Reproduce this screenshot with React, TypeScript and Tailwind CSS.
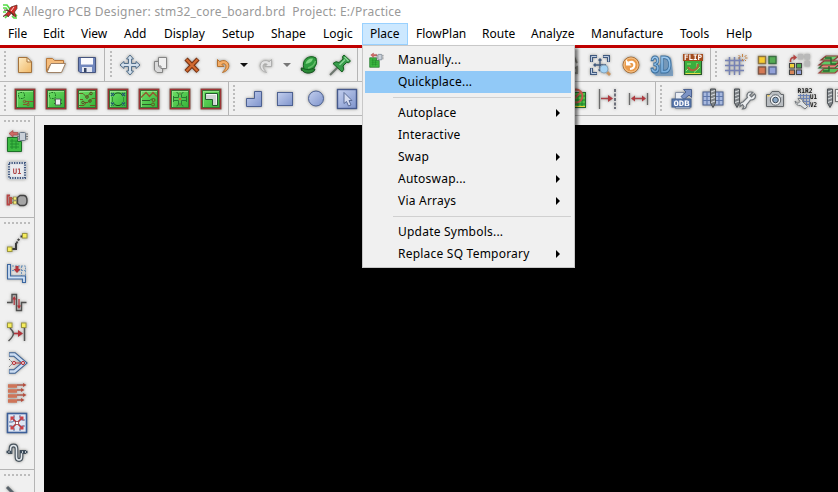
import React from "react";

type Glyph = () => React.ReactNode;

const Svg = ({ children }: { children: React.ReactNode }) => (
  <svg
    width="24"
    height="24"
    viewBox="0 0 24 24"
    fill="none"
    className="shrink-0 overflow-visible drop-shadow-[0_0_1.5px_rgba(70,70,60,0.55)]"
  >
    {children}
  </svg>
);

const Gradients = () => (
  <svg width="0" height="0" className="absolute">
    <defs>
      <linearGradient id="steel" x1="0" y1="0" x2="1" y2="1">
        <stop offset="0" stopColor="#c3cfee" />
        <stop offset="1" stopColor="#7f94cc" />
      </linearGradient>
      <linearGradient id="leaf" x1="0" y1="0" x2="1" y2="1">
        <stop offset="0" stopColor="#6bdc62" />
        <stop offset="1" stopColor="#37b43a" />
      </linearGradient>
      <linearGradient id="sand" x1="0" y1="0" x2="1" y2="1">
        <stop offset="0" stopColor="#fdebc4" />
        <stop offset="1" stopColor="#f0b765" />
      </linearGradient>
      <linearGradient id="sky" x1="0" y1="0" x2="0" y2="1">
        <stop offset="0" stopColor="#a9d0f2" />
        <stop offset="1" stopColor="#6fa9dc" />
      </linearGradient>
    </defs>
  </svg>
);

/* ---------- file and edit glyphs ---------- */

const NewFile: Glyph = () => (
  <g stroke="#a5733c">
    <path d="M5.500 4.500H14L18.500 9V19.500H5.500Z" fill="url(#sand)" />
    <path d="M14 4.500V9H18.500Z" fill="#fff3d8" />
  </g>
);
const OpenFolder: Glyph = () => (
  <g stroke="#b8793c">
    <path d="M2.500 18.500V5.500H8.500L10.500 7.500H19.500V12H6Z" fill="#f5bd7c" />
    <path d="M3 19.500L7 10.500H21.500L17.500 19.500Z" fill="#fffefb" stroke="#a08266" />
  </g>
);
const Save: Glyph = () => (
  <g>
    <path d="M3.500 4.500H20.500V19.500H5L3.500 18Z" fill="#7187bd" stroke="#46557f" />
    <rect x="6" y="5" width="12" height="7" fill="#f8f9fd" />
    <path d="M6 11.500H18" stroke="#b9c2de" />
    <rect x="7" y="14" width="10" height="5" fill="#e3e7f2" />
    <rect x="9" y="15" width="2.500" height="4" fill="#344465" />
  </g>
);
const Move: Glyph = () => (
  <path
    d="M12 2L15.500 6H13.500V10.500H18V8.500L22 12L18 15.500V13.500H13.500V18H15.500L12 22L8.500 18H10.500V13.500H6V15.500L2 12L6 8.500V10.500H10.500V6H8.500Z"
    fill="#d3e0ec"
    stroke="#55718c"
  />
);
const Copy: Glyph = () => (
  <g stroke="#858585">
    <path d="M5.500 8.500H13.500V19.500H8L5.500 17Z" fill="#dadada" />
    <path d="M9.500 4.500H17.500V15.500H12L9.500 13Z" fill="#efefef" />
    <path d="M9.500 13H12V15.500" />
  </g>
);
const Delete: Glyph = () => (
  <g>
    <path d="M6 6L18 18.500M18 6L6 18.500" stroke="#7a3212" strokeWidth="4.400" />
    <path d="M6.500 6.500L17.500 18M17.500 6.500L6.500 18" stroke="#d26a30" strokeWidth="2.200" />
  </g>
);
const Undo: Glyph = () => (
  <path
    d="M6.500 6.500V13.500H13L10.800 11.300C13.500 9.800 15.500 11.500 14.800 14.500C14.400 16.300 13 17.500 11.500 19.500C15.500 18.500 18 15.500 17.800 12.500C17.500 8 12.500 6.200 8.700 8.700Z"
    fill="#f3ad67"
    stroke="#b5712f"
  />
);
const Redo: Glyph = () => (
  <path
    d="M17.500 6.500V13.500H11L13.200 11.300C10.500 9.800 8.500 11.500 9.200 14.500C9.600 16.300 11 17.500 12.500 19.500C8.500 18.500 6 15.500 6.200 12.500C6.500 8 11.500 6.200 15.300 8.700Z"
    fill="#e3e3e3"
    stroke="#aeaeae"
  />
);
const PinRound: Glyph = () => (
  <g>
    <path d="M4 17L9 15" stroke="#333" strokeWidth="2" />
    <path d="M4 15Q6 21 13 20Q18 19 18 16Z" fill="#2a8a36" stroke="#165020" />
    <path d="M7 16Q5 9 9 5.500Q14 2 19 5Q21 11 17 15Q12 18 7 16Z" fill="#2f9c3f" stroke="#15601f" />
    <path d="M8.500 11Q10 5 16 5.500Q15 10 8.500 11Z" fill="#7ed482" />
    <path d="M11 15Q17 13.500 18.500 8" stroke="#65bb68" strokeWidth="1.300" />
  </g>
);
const PinLong: Glyph = () => (
  <g>
    <path d="M2 22L11 13" stroke="#6c756d" strokeWidth="2" />
    <path d="M5 10.500Q8 7.500 11 9.500L15 6Q13.500 3.500 16 2L22.500 8Q21 10.500 18.500 9.500L15 13Q17 16.500 14 19Z" fill="#379c4b" stroke="#15601f" />
    <path d="M11.500 12L17 6.500M16.500 4L20.500 8" stroke="#8ad495" strokeWidth="1.500" />
  </g>
);

/* ---------- circuit board glyphs ---------- */

const Board = ({ children }: { children?: React.ReactNode }) => (
  <g>
    <rect x="1.500" y="1.500" width="21" height="21" fill="#8c5149" />
    <rect x="2" y="2" width="20" height="20" fill="#9c3436" />
    <rect x="3" y="3" width="18" height="18" fill="#3c6e33" />
    <rect x="4" y="4" width="16" height="16" fill="#98e68e" />
    <rect x="4.800" y="4.800" width="15.200" height="15.200" fill="url(#leaf)" />
    {children}
  </g>
);
const BoardTrace: Glyph = () => (
  <Board>
    <rect x="5.500" y="5.500" width="6" height="6" rx="2" stroke="#14601c" strokeDasharray="1.400 1" />
    <path d="M10 17.500H14L16.500 14.500H20M12 14.500H16" stroke="#8a5530" />
    <circle cx="11.500" cy="14.500" r="1.200" stroke="#8a5530" />
    <circle cx="15" cy="17.500" r="1.200" stroke="#8a5530" />
  </Board>
);
const BoardPart: Glyph = () => (
  <Board>
    <rect x="5.500" y="5.500" width="6" height="6" rx="2" stroke="#14601c" strokeDasharray="1.400 1" />
    <path d="M10 13H18M10 16.500H18" stroke="#285a2c" />
    <rect x="11.500" y="12" width="5" height="6" fill="#eceff0" stroke="#53665a" />
  </Board>
);
const BoardNets: Glyph = () => (
  <Board>
    <path d="M4 6.500H8L11 9.500M12 9.500L15 6.500M20 11.500H17L13 15.500H9M4 18.500H9L11 16M15 18.500H20M5 12.500H8" stroke="#6b5a26" />
    <g stroke="#5a4a22">
      <circle cx="12" cy="10" r="1.300" /><circle cx="16" cy="6.500" r="1.300" /><circle cx="8" cy="15.500" r="1.300" /><circle cx="15" cy="14" r="1.300" />
    </g>
  </Board>
);
const BoardArcs: Glyph = () => (
  <Board>
    <path d="M8 8Q9 6 11 6H13Q15 6 16 8M8 16.500Q9 18.500 11 18.500H13Q15 18.500 16 16.500" stroke="#14501c" />
    <path d="M5 6L8 9M8 6L5 9M16 6L19 9M19 6L16 9M5 15.500L8 18.500M8 15.500L5 18.500M16 15.500L19 18.500M19 15.500L16 18.500" stroke="#23566c" strokeWidth="1.200" />
    <path d="M6.500 10V15M17.500 10V15" stroke="#2f9135" />
  </Board>
);
const BoardZig: Glyph = () => (
  <Board>
    <path d="M4 10.500L9 5.500L12.500 9.500L16 5.500L20 9.500" stroke="#95572f" strokeWidth="1.300" />
    <path d="M5 13.500H13L15 11.500M5 17.500H14" stroke="#2c5e28" />
    <circle cx="16.500" cy="13" r="1.500" stroke="#6b4e22" />
    <circle cx="16" cy="17.500" r="1.500" stroke="#6b4e22" />
  </Board>
);
const BoardCross: Glyph = () => (
  <Board>
    <path d="M10.500 10.500V7.500Q10.500 5.500 8.500 5.500M13.500 10.500V7.500Q13.500 5.500 15.500 5.500M10.500 13.500V17Q10.500 19 8.500 19M13.500 13.500V17Q13.500 19 15.500 19M5.500 9V15M18.500 9V15M5.500 10.500H10.500M5.500 13.500H10.500M13.500 10.500H18.500M13.500 13.500H18.500" stroke="#2a7c34" />
    <circle cx="12" cy="12" r="1.300" fill="#b8733a" />
    <path d="M12 5.500V8M12 16V19" stroke="#7a6a30" />
  </Board>
);
const BoardL: Glyph = () => (
  <Board>
    <path d="M6.500 6.500H18.500V18.500H13.500V12.500H6.500Z" fill="#ced3d2" stroke="#245a30" />
    <path d="M7.500 7.500H17.500V17.500" stroke="#f4f4f4" />
  </Board>
);

/* ---------- shapes ---------- */

const ShapeL: Glyph = () => <path d="M12.500 4.500H19.500V19.500H4.500V11.500H12.500Z" fill="url(#steel)" stroke="#4d6192" />;
const ShapeRect: Glyph = () => <rect x="4.500" y="5.500" width="15" height="13" fill="url(#steel)" stroke="#4d6192" />;
const ShapeCircle: Glyph = () => <circle cx="12" cy="11.500" r="7.500" fill="url(#steel)" stroke="#4d6192" />;
const SelectArrow: Glyph = () => (
  <g>
    <rect x="2.500" y="2.500" width="19" height="19" fill="url(#steel)" stroke="#46598c" strokeWidth="1.400" />
    <path d="M9 5.500V16.500L11.500 14.500L13.500 19L16 18L14 13.500H17Z" fill="#d5dcf0" stroke="#5b6d98" />
  </g>
);

/* ---------- view glyphs ---------- */

const ZoomFit: Glyph = () => (
  <g>
    <path d="M3.500 9V3.500H9M15 3.500H20.500V9M3.500 15V20.500H9" stroke="#40597e" strokeWidth="3" />
    <path d="M3.500 8.500V3.500H8.500M15.500 3.500H20.500V8.500M3.500 15.500V20.500H8.500" stroke="#bdcde2" strokeWidth="1" />
    <path d="M12 6V18M6 12H18M10.500 7.500L12 6L13.500 7.500M7.500 10.500L6 12L7.500 13.500M10.500 16.500L12 18" stroke="#40597e" strokeWidth="1.300" />
    <path d="M18 18L22 22" stroke="#c99460" strokeWidth="2.600" />
    <circle cx="16" cy="16" r="4" fill="#a5d3f4" stroke="#88a6bd" />
  </g>
);
const Refresh: Glyph = () => (
  <g>
    <circle cx="12" cy="12" r="8" fill="#e99a4a" stroke="#a5713f" />
    <circle cx="12" cy="12" r="7" stroke="#f7c890" />
    <path d="M9.500 9.800Q14 7.500 15.300 11Q16 15.500 11 16" stroke="#fff" strokeWidth="2.200" />
    <path d="M7 6.500V12.500H12.500Z" fill="#fff" />
  </g>
);
const ThreeD: Glyph = () => (
  <g>
    <path d="M2 19L6 23H23V19L21 5L18 3Z" fill="#6f97bd" opacity=".85" />
    <text x="0.500" y="20" fontFamily="Liberation Sans, sans-serif" fontWeight="bold" fontSize="24" textLength="21" lengthAdjust="spacingAndGlyphs" fill="url(#sky)" stroke="#3d719f" strokeWidth="1.100">3D</text>
  </g>
);
const Flip: Glyph = () => (
  <g>
    <rect x="3.500" y="7.500" width="17" height="14" fill="#3aae3e" stroke="#27582a" />
    <path d="M4.500 20.500H19.500" stroke="#e3e04a" />
    <path d="M5 18L9 14M13 19.500L19 14M16 10V16M6 11H10" stroke="#a3ea7c" />
    <path d="M7 14Q9 18 13 17Q17 16 17 11" stroke="#a9633c" strokeWidth="2" />
    <rect x="2" y="1" width="20" height="7" fill="#a34c1e" />
    <text x="3" y="7" fontFamily="DejaVu Sans Mono, monospace" fontWeight="bold" fontSize="7.500" textLength="18" lengthAdjust="spacingAndGlyphs" fill="#fff">FLIP</text>
  </g>
);
const Grid: Glyph = () => (
  <g>
    <path d="M5.500 4V22M10.500 4V22M15.500 4V22M1 7.500H20M1 12.500H20M1 17.500H20" stroke="#7682b4" strokeWidth="1.500" />
    <path d="M18.500 1V4M14.500 2L16.500 4M22.500 2L20.500 4M18.500 6V8M21 5H23.500M14 5H16M22 8L20.500 6.500" stroke="#c58345" />
  </g>
);
const ColorGrid: Glyph = () => (
  <g strokeWidth="1.400">
    <rect x="3.500" y="3.500" width="7" height="7" fill="#f7cc30" stroke="#8d7440" />
    <rect x="14" y="3.500" width="7" height="7" fill="#55ac54" stroke="#3c6f43" />
    <rect x="3.500" y="14" width="7" height="7" fill="#d57954" stroke="#7f5646" />
    <rect x="14" y="14" width="7" height="7" fill="#92a1d8" stroke="#5c688f" />
  </g>
);
const ColorSwap: Glyph = () => (
  <g>
    <path d="M12 1H17V6.500H12ZM18.500 1H24V6.500H18.500ZM18.500 8H24V13.500H18.500Z" fill="#b9b9b9" />
    <path d="M4.500 9Q4 4.500 8 4.500" stroke="#b4423f" strokeWidth="1.600" />
    <path d="M7.500 1.500L11 4.500L7.500 7.500Z" fill="#b4423f" />
    <rect x="3.500" y="10.500" width="5" height="4.500" fill="#f0cf3a" stroke="#444" />
    <rect x="10.500" y="10.500" width="5" height="4.500" fill="#4dac4e" stroke="#444" />
    <rect x="3.500" y="17" width="5" height="4.500" fill="#d68559" stroke="#444" />
    <rect x="10.500" y="17" width="5" height="4.500" fill="#8d9dd6" stroke="#444" />
  </g>
);
const Layers: Glyph = () => (
  <g strokeWidth="1.200">
    <path d="M2 20L7 15.500H23L18 20Z" fill="#58c05a" stroke="#a0443e" />
    <path d="M2 15L7 10.500H23L18 15Z" fill="#e8837a" stroke="#2d6d38" />
    <path d="M2 12L7 8H23L18 12Z" fill="#5fc866" stroke="#8c3a36" />
    <path d="M4 7L9 3H22L17 7Z" fill="#6fcf70" stroke="#8c3a36" />
    <path d="M8 5H14V11H19M6 18H12V13" stroke="#266a2e" strokeWidth="1.400" />
  </g>
);
const ClippedGlyph: Glyph = () => (
  <g stroke="#8a8a84" strokeWidth="1.800">
    <path d="M17 4L20 10M15 17L20 14V20H15" />
  </g>
);
const BoardBlocked: Glyph = () => (
  <g>
    <rect x="2.500" y="5.500" width="18" height="15" fill="#4fc348" stroke="#24662b" />
    <path d="M4 9H20M4 13H20M4 17H20M13 7V20M17 7V20" stroke="#1f7c2b" />
    <path d="M3 19.500H20" stroke="#e8d338" />
    <circle cx="11" cy="9" r="6.500" stroke="#c6584c" strokeWidth="2" />
    <path d="M7 14L16 5" stroke="#c6584c" strokeWidth="1.800" />
  </g>
);
const SpaceTo: Glyph = () => (
  <g>
    <path d="M3.500 2V22" stroke="#6b6b6b" strokeWidth="1.300" />
    <path d="M19 2V22" stroke="#4a4d5c" strokeWidth="1.500" strokeDasharray="3 1.500" />
    <path d="M5 11.500H14" stroke="#a94348" strokeWidth="1.500" />
    <path d="M12 8L17 11.500L12 15Z" fill="#b03a40" />
  </g>
);
const SpaceBetween: Glyph = () => (
  <g>
    <path d="M2.500 6V18M20.500 6V18" stroke="#6b6b6b" strokeWidth="1.300" />
    <path d="M6 11.500H17" stroke="#a94348" strokeWidth="1.500" />
    <path d="M4 11.500L8 8.500V14.500ZM19 11.500L15 8.500V14.500Z" fill="#b03a40" />
  </g>
);

/* ---------- manufacture glyphs ---------- */

const Odb: Glyph = () => (
  <g>
    <path d="M5.500 5.500H14V12H20V21.500H5.500Z" fill="#e9edf4" stroke="#8792a6" />
    <path d="M11 9.500L16 5L13.500 2.500H21.500V10.500L19 8L14 12.500Z" fill="#7c93c4" stroke="#4c618f" />
    <rect x="2" y="12" width="19" height="8" fill="#5b79ae" stroke="#42608e" />
    <text x="3.500" y="18.800" fontFamily="DejaVu Sans Mono, monospace" fontWeight="bold" fontSize="7.500" textLength="16" lengthAdjust="spacingAndGlyphs" fill="#fff">ODB</text>
  </g>
);
const Drill = ({ x = 9 }: { x?: number }) => (
  <g transform={`translate(${x} 1)`}>
    <path d="M.5 1H5.500V15L3 19.500L.5 15Z" fill="#7d8286" stroke="#4c5156" />
    <path d="M1 4L5 2.500M1 7.500L5 6M1 11L5 9.500M1 14.500L5 13" stroke="#d5d9db" strokeWidth="1.300" />
  </g>
);
const Ncdrill: Glyph = () => (
  <g>
    <rect x="2" y="5" width="20" height="13" fill="#a8b9de" stroke="#4a6091" />
    <path d="M2 9.500H22M2 13.500H22M6 5V18M18 5V18" stroke="#5f78ac" strokeWidth="1.200" />
    <Drill />
  </g>
);
const wrench = "M20.500 7.500L17.500 10.500L15.800 8.800L18.800 5.800Q14 4.500 13 8.500Q12.800 10 13.500 11L9 15.500Q5.500 16 6 20L8.500 18L10 20L8.500 22.500Q12.500 22.500 12.500 18.500L16.500 13.500Q21.500 13.500 21.500 9Z";
const DrillWrench: Glyph = () => (
  <g>
    <Drill x={2} />
    <path d={wrench} transform="translate(2 -.5)" fill="#eceef0" stroke="#6f757b" strokeWidth="1.200" />
  </g>
);
const Camera: Glyph = () => (
  <g>
    <path d="M3.500 7.500H7L9 4.500H16L18 7.500H20.500V19.500H3.500Z" fill="#b9bdc1" stroke="#62666a" />
    <path d="M4.500 9H19.500" stroke="#e8eaec" />
    <circle cx="12.500" cy="13" r="5.200" fill="#f1f3f5" stroke="#5b6066" />
    <circle cx="12.500" cy="13" r="2.800" fill="#8aa6c4" stroke="#3a4754" />
    <rect x="4.500" y="8" width="2" height="1.500" fill="#f0c64a" />
  </g>
);
const RefDes: Glyph = () => (
  <g>
    <path d="M6.500 7V16M9.500 7V19M12.500 7V20M15.500 8V20M4 8.500H16M5 11.500H16M8 14.500H16M10 17.500H16" stroke="#6b82b4" />
    <path d="M1 14L4 16.500L6 14.500L4 11.500Q8.500 11 9 15L13.500 19.500L11 22L6.500 18.500Q2 19 1 14Z" fill="#dfe2e4" stroke="#777c81" />
    <g fontFamily="DejaVu Sans Mono, monospace" fontWeight="bold" fontSize="6.500" fill="#111">
      <text x="3.500" y="5.800" textLength="15" lengthAdjust="spacingAndGlyphs">R1R2</text>
      <text x="16" y="12" textLength="7" lengthAdjust="spacingAndGlyphs">U1</text>
      <text x="16" y="20" textLength="7" lengthAdjust="spacingAndGlyphs">V2</text>
    </g>
  </g>
);
const DrillTable: Glyph = () => (
  <g>
    <Drill x={2} />
    <rect x="10.500" y="2.500" width="12" height="12" fill="#f2f2f2" stroke="#777" />
    <path d="M12 6H20M12 9H20" stroke="#888" strokeDasharray="2 1" />
  </g>
);

/* ---------- placement and routing glyphs ---------- */

const PlacePart: Glyph = () => (
  <g>
    <path d="M2.500 8.500H12.500V12.500H16.500V22.500H2.500Z" fill="#3dbb42" stroke="#1c7028" />
    <path d="M5 12H13M5 15H14M5 18H14M7 10V20M11 12V20" stroke="#1f8a2d" strokeWidth=".9" />
    <path d="M4 4.500L8 1.500V3.500H13V6H8V8Z" fill="#cf6a65" stroke="#a33f40" strokeWidth=".6" />
    <rect x="14.500" y="3.500" width="6" height="8" rx="1" fill="#c9d0d8" stroke="#687686" />
    <path d="M12 5H14M12 7.500H14M12 10H14M21 5H23M21 7.500H23M21 10H23" stroke="#777" />
  </g>
);
const ChipU1: Glyph = () => (
  <g>
    <rect x="2.500" y="2.500" width="19" height="18" rx="2" fill="#d6dbe2" />
    <rect x="4" y="4" width="16" height="15" stroke="#42587f" strokeWidth="2" strokeDasharray="1.300 1.200" />
    <rect x="5.500" y="5.500" width="13" height="12" fill="#e9ebee" />
    <text x="7.500" y="14.500" fontFamily="DejaVu Sans, sans-serif" fontSize="7.500" fontWeight="bold" textLength="9" lengthAdjust="spacingAndGlyphs" fill="#b0484a">U1</text>
  </g>
);
const Connector: Glyph = () => (
  <g>
    <path d="M5 6.500H2.500V15.500H5" stroke="#b64445" strokeWidth="1.800" />
    <path d="M5 9.500H14M5 13.500H14" stroke="#8c863e" strokeWidth="1.600" />
    <rect x="4" y="8" width="3" height="7" fill="#b65046" />
    <rect x="8.500" y="8" width="3" height="3" fill="#f2eb7c" stroke="#8c8545" strokeWidth=".6" />
    <rect x="8.500" y="12" width="3" height="3" fill="#f2eb7c" stroke="#8c8545" strokeWidth=".6" />
    <path d="M12.500 8.500L15 6.500H19Q22 7 22 11.500Q22 16 19 16.500H15L12.500 14.500Z" fill="#a5a5a5" stroke="#444" strokeWidth="1.400" />
  </g>
);
const Pad = ({ x, y }: { x: number; y: number }) => <rect x={x} y={y} width="4.500" height="4.500" fill="#f6ed5d" stroke="#9c9740" />;
const Connect: Glyph = () => (
  <g>
    <path d="M7 18H11V12M13 9.500L14 8M15.500 5.500H18" stroke="#3a3a3a" strokeWidth="2" />
    <path d="M11 13L14 8" stroke="#444" strokeWidth="1.800" strokeDasharray="3 1.500" />
    <Pad x={2.500} y={16} /><Pad x={17.500} y={2.500} />
  </g>
);
const Slide: Glyph = () => (
  <g>
    <path d="M7 5H20.500V15M7 9.500H20.500M16.500 5V15" stroke="#6f95bd" strokeDasharray="2 1" />
    <path d="M4 3V16.500H19V22" stroke="#3c669f" strokeWidth="4" />
    <path d="M4 4V16.500H19V21" stroke="#cfe1f6" strokeWidth="1.800" />
    <path d="M10.500 5H13.500V8H15.500L12 12L8.500 8H10.500Z" fill="#b5363c" />
  </g>
);
const DelayTune: Glyph = () => (
  <g>
    <path d="M2 11.500H7V3.500H11.500V19.500H16.500V11.500H21.500" stroke="#505050" strokeWidth="1.400" />
    <path d="M9.200 14V7M14 8V15" stroke="#b2333a" strokeWidth="1.200" />
    <path d="M7.200 8.500L9.200 5L11.200 8.500ZM12 14.500L14 18L16 14.500Z" fill="#b2333a" />
  </g>
);
const Fanout: Glyph = () => (
  <g>
    <path d="M5 7Q8 10 8.500 12.500Q8 16 3.500 20M19.500 7V20" stroke="#555" strokeWidth="1.500" />
    <path d="M9 12.500H14" stroke="#b2333a" strokeWidth="1.600" />
    <path d="M13 9L18 12.500L13 16Z" fill="#b2333a" />
    <Pad x={2.500} y={2} /><Pad x={16.500} y={2} />
  </g>
);
const Smooth: Glyph = () => (
  <g>
    <path d="M4 3.500H9.500L19.500 12L9.500 20.500H4" stroke="#3d6294" strokeWidth="4.400" />
    <path d="M4.500 3.500H9.500L19.500 12L9.500 20.500H4.500" stroke="#cbdcf1" strokeWidth="2.400" />
    <path d="M4 8L8 12L4 16" stroke="#666" strokeDasharray="2 1" />
    <path d="M9 12H18" stroke="#b2333a" />
    <circle cx="9" cy="12" r="1.600" fill="#f2c7c7" stroke="#b2333a" />
    <circle cx="18" cy="12" r="1.600" fill="#f2c7c7" stroke="#b2333a" />
  </g>
);
const Bundle: Glyph = () => (
  <g stroke="#cf7458">
    <path d="M3 5H12M3 10H12M3 15H12M3 20H12" strokeWidth="3.400" />
    <path d="M12 4H19M12 9H17M12 14H19M12 19H17" stroke="#b0584a" strokeWidth="1.400" />
    <path d="M18 2V6L21.500 4ZM16 7V11L19.500 9ZM18 12V16L21.500 14ZM16 17V21L19.500 19Z" fill="#b5503f" stroke="none" />
  </g>
);
const SpreadRoute: Glyph = () => (
  <g>
    <rect x="2.500" y="2.500" width="19" height="19" fill="#dfe6f3" stroke="#3c5f99" strokeWidth="1.600" />
    <path d="M4 11H7Q9 11 9 9V4M15 4V7Q15 9 17 9H20M4 15H7Q9 15 9 17V20M15 20V17Q15 15 17 15H20" stroke="#5373a8" />
    <path d="M7 7L17 17M17 7L7 17" stroke="#b8363d" strokeWidth="1.700" />
    <path d="M5.500 5.500H10L5.500 10ZM18.500 5.500H14L18.500 10ZM5.500 18.500H10L5.500 14ZM18.500 18.500H14L18.500 14Z" fill="#cf4246" />
    <rect x="10.500" y="10.500" width="3" height="3" fill="#fff" stroke="#8c3541" strokeWidth=".7" />
  </g>
);
const meander = "M3 11H5.500V8Q5.500 4.500 8.500 4.500Q11.500 4.500 11.500 8V16Q11.500 19 14 19Q16.500 19 16.500 16V11H21";
const Meander: Glyph = () => (
  <g>
    <path d={meander} stroke="#46525c" strokeWidth="3.800" />
    <path d={meander} stroke="#e3e8ec" strokeWidth="1.500" />
    <path d="M1.500 11H7M15 11H22.500" stroke="#3a4a5a" strokeWidth="2.600" strokeDasharray="2 1" />
  </g>
);
const Line: Glyph = () => <path d="M2 5L16 19" stroke="#59636b" strokeWidth="3" />;

/* ---------- chrome ---------- */

const Slot = ({ glyph: G }: { glyph: Glyph }) => (
  <div className="flex h-[30px] w-[31px] shrink-0 items-center justify-center">
    <Svg><G /></Svg>
  </div>
);
const Caret = ({ dim = false }: { dim?: boolean }) => (
  <div className="flex w-[12px] shrink-0 justify-center">
    <div className={`h-0 w-0 border-x-[4px] border-t-[4px] border-x-transparent ${dim ? "border-t-[#777]" : "border-t-[#111]"}`} />
  </div>
);
const Grip = () => (
  <div className="h-[28px] w-[2px] shrink-0 bg-[repeating-linear-gradient(to_bottom,#bcbcbc_0_2px,transparent_2px_4px)]" />
);
const GripRow = () => (
  <div className="h-[2px] w-[27px] shrink-0 bg-[repeating-linear-gradient(to_right,#bcbcbc_0_2px,transparent_2px_4px)]" />
);

const Group = ({ className, children }: { className: string; children?: React.ReactNode }) => (
  <div className={`flex h-full shrink-0 items-center border-r border-[#b5b5b5] ${className}`}>{children}</div>
);

const menuNames: [string, string][] = [
  ["File", "w-[35px]"], ["Edit", "w-[38px]"], ["View", "w-[43px]"], ["Add", "w-[40px]"],
  ["Display", "w-[58px]"], ["Setup", "w-[49px]"], ["Shape", "w-[52px]"], ["Logic", "w-[47px]"],
  ["Place", "w-[46px]"], ["FlowPlan", "w-[66px]"], ["Route", "w-[49px]"], ["Analyze", "w-[60px]"],
  ["Manufacture", "w-[89px]"], ["Tools", "w-[46px]"], ["Help", "w-[40px]"],
];

const placeMenu: { label?: string; sub?: boolean; active?: boolean; glyph?: Glyph }[] = [
  { label: "Manually...", glyph: PlacePart },
  { label: "Quickplace...", active: true },
  {},
  { label: "Autoplace", sub: true },
  { label: "Interactive" },
  { label: "Swap", sub: true },
  { label: "Autoswap...", sub: true },
  { label: "Via Arrays", sub: true },
  {},
  { label: "Update Symbols..." },
  { label: "Replace SQ Temporary", sub: true },
];

const PlaceMenu = () => (
  <div className="absolute left-[362px] top-[45px] z-10 h-[223px] w-[213px] border border-[#c8c8c8] bg-[#f0f0f0] py-[3px] pl-[2px] pr-[3px] shadow-[3px_3px_3px_rgba(0,0,0,0.5)]">
    {placeMenu.map((m, i) =>
      m.label ? (
        <div key={i} className={`flex h-[22px] items-center pr-[11px] ${m.active ? "bg-[#91c9f7]" : ""}`}>
          <div className="w-[33px] shrink-0">
            {m.glyph && (
              <svg width="17" height="17" viewBox="0 0 25 25" fill="none" className="ml-[3px]"><m.glyph /></svg>
            )}
          </div>
          <span className="grow whitespace-nowrap tracking-[0.22px]">{m.label}</span>
          {m.sub && <div className="h-0 w-0 border-y-[4px] border-l-[4px] border-y-transparent border-l-black" />}
        </div>
      ) : (
        <div key={i} className="flex h-[9px] items-center pl-[28px]">
          <div className="h-px w-full bg-[#d0d0d0]" />
        </div>
      )
    )}
  </div>
);

const leftTop: Glyph[] = [PlacePart, ChipU1, Connector];
const leftMid: Glyph[] = [Connect, Slide, DelayTune, Fanout, Smooth, Bundle, SpreadRoute, Meander];
const boards: Glyph[] = [BoardTrace, BoardPart, BoardNets, BoardArcs, BoardZig, BoardCross, BoardL];

export default function App() {
  return (
    <div className="relative flex h-[492px] w-[838px] flex-col overflow-hidden bg-[#f0f0f0] font-['Noto_Sans',sans-serif] text-[12px] text-black">
      <Gradients />
      <header className="flex h-[23px] shrink-0 items-center bg-white text-[#999]">
        <svg width="16" height="16" viewBox="0 0 16 16" fill="none" className="ml-[2px] mr-[5px]">
          <path d="M1 1H5L8 5M1 4H4L7 8M1 8H4M10 12L12 14H15M3 14L6 11M11 9L15 12" stroke="#55db47" strokeWidth="1.700" />
          <path d="M1 12.500L5 9L9 3L15 1V4.500L12.500 8L14 13L11 11.500L9.500 9L6 13L5.500 11Z" fill="#d2302a" stroke="#5a2a20" strokeWidth=".7" />
          <path d="M2 6L6 6.500L12 11" stroke="#5b3327" strokeWidth="1.200" />
          <path d="M12 3L9 7" stroke="#f6dcd8" />
        </svg>
        <h1 className="whitespace-pre tracking-[0.24px]">Allegro PCB Designer: stm32_core_board.brd  Project: E:/Practice</h1>
      </header>

      <nav className="flex h-[22px] shrink-0 bg-white">
        {menuNames.map(([name, width]) =>
          name === "Place" ? (
            <div key={name} className={`flex items-center border border-[#99d1ff] bg-[#cce8ff] pl-[7px] ${width}`}>{name}</div>
          ) : (
            <div key={name} className={`flex items-center pl-[8px] ${width}`}>{name}</div>
          )
        )}
      </nav>
      <div className="h-[3px] shrink-0 bg-[#c00000]" />

      <div className="flex h-[34px] shrink-0 border-b border-[#b8b8b8]">
        <Group className="w-[105px] pl-[4px]">
          <Grip />
          <div className="flex pl-[3px]">
            <Slot glyph={NewFile} /><Slot glyph={OpenFolder} /><Slot glyph={Save} />
          </div>
        </Group>
        <Group className="w-[253px] pl-[5px]">
          <Grip />
          <div className="flex items-center pl-[2px]">
            <Slot glyph={Move} /><Slot glyph={Copy} /><Slot glyph={Delete} /><Slot glyph={Undo} />
            <Caret /><Slot glyph={Redo} /><Caret dim /><Slot glyph={PinRound} /><Slot glyph={PinLong} />
          </div>
        </Group>
        <Group className="w-[353px] justify-end pr-[2px]">
          <Slot glyph={ClippedGlyph} /><Slot glyph={ZoomFit} /><Slot glyph={Refresh} /><Slot glyph={ThreeD} /><Slot glyph={Flip} />
        </Group>
        <div className="flex items-center pl-[4px]">
          <Grip />
          <div className="flex pl-[3px]">
            <Slot glyph={Grid} /><Slot glyph={ColorGrid} /><Slot glyph={ColorSwap} /><Slot glyph={Layers} />
          </div>
        </div>
      </div>

      <div className="flex h-[34px] shrink-0 border-b border-[#b8b8b8]">
        <Group className="w-[229px] pl-[4px]">
          <Grip />
          <div className="flex pl-[3px]">{boards.map((g, i) => <Slot key={i} glyph={g} />)}</div>
        </Group>
        <Group className="w-[427px] pl-[4px]">
          <Grip />
          <div className="flex pl-[3px]">
            <Slot glyph={ShapeL} /><Slot glyph={ShapeRect} /><Slot glyph={ShapeCircle} /><Slot glyph={SelectArrow} />
          </div>
          <div className="ml-auto flex pr-[1px]">
            <Slot glyph={BoardBlocked} /><Slot glyph={SpaceTo} /><Slot glyph={SpaceBetween} />
          </div>
        </Group>
        <div className="flex items-center pl-[4px]">
          <Grip />
          <div className="flex pl-[4px]">
            <Slot glyph={Odb} /><Slot glyph={Ncdrill} /><Slot glyph={DrillWrench} /><Slot glyph={Camera} /><Slot glyph={RefDes} /><Slot glyph={DrillTable} />
          </div>
        </div>
      </div>

      <main className="flex min-h-0 grow">
        <aside className="flex w-[35px] shrink-0 flex-col items-center overflow-hidden border-r border-[#b5b5b5]">
          <div className="flex h-[102px] w-full shrink-0 flex-col items-center border-b border-[#b5b5b5] pt-[4px]">
            <GripRow />
            <div className="flex flex-col pt-[4px]">{leftTop.map((g, i) => <Slot key={i} glyph={g} />)}</div>
          </div>
          <div className="flex h-[252px] w-full shrink-0 flex-col items-center border-b border-[#b5b5b5] pt-[4px]">
            <GripRow />
            <div className="flex flex-col pt-[4px]">{leftMid.map((g, i) => <Slot key={i} glyph={g} />)}</div>
          </div>
          <div className="flex w-full shrink-0 flex-col items-center pt-[4px]">
            <GripRow />
            <div className="pt-[3px]"><Slot glyph={Line} /></div>
          </div>
        </aside>
        <section className="ml-[9px] mt-[9px] grow bg-black" />
      </main>

      <PlaceMenu />
    </div>
  );
}
